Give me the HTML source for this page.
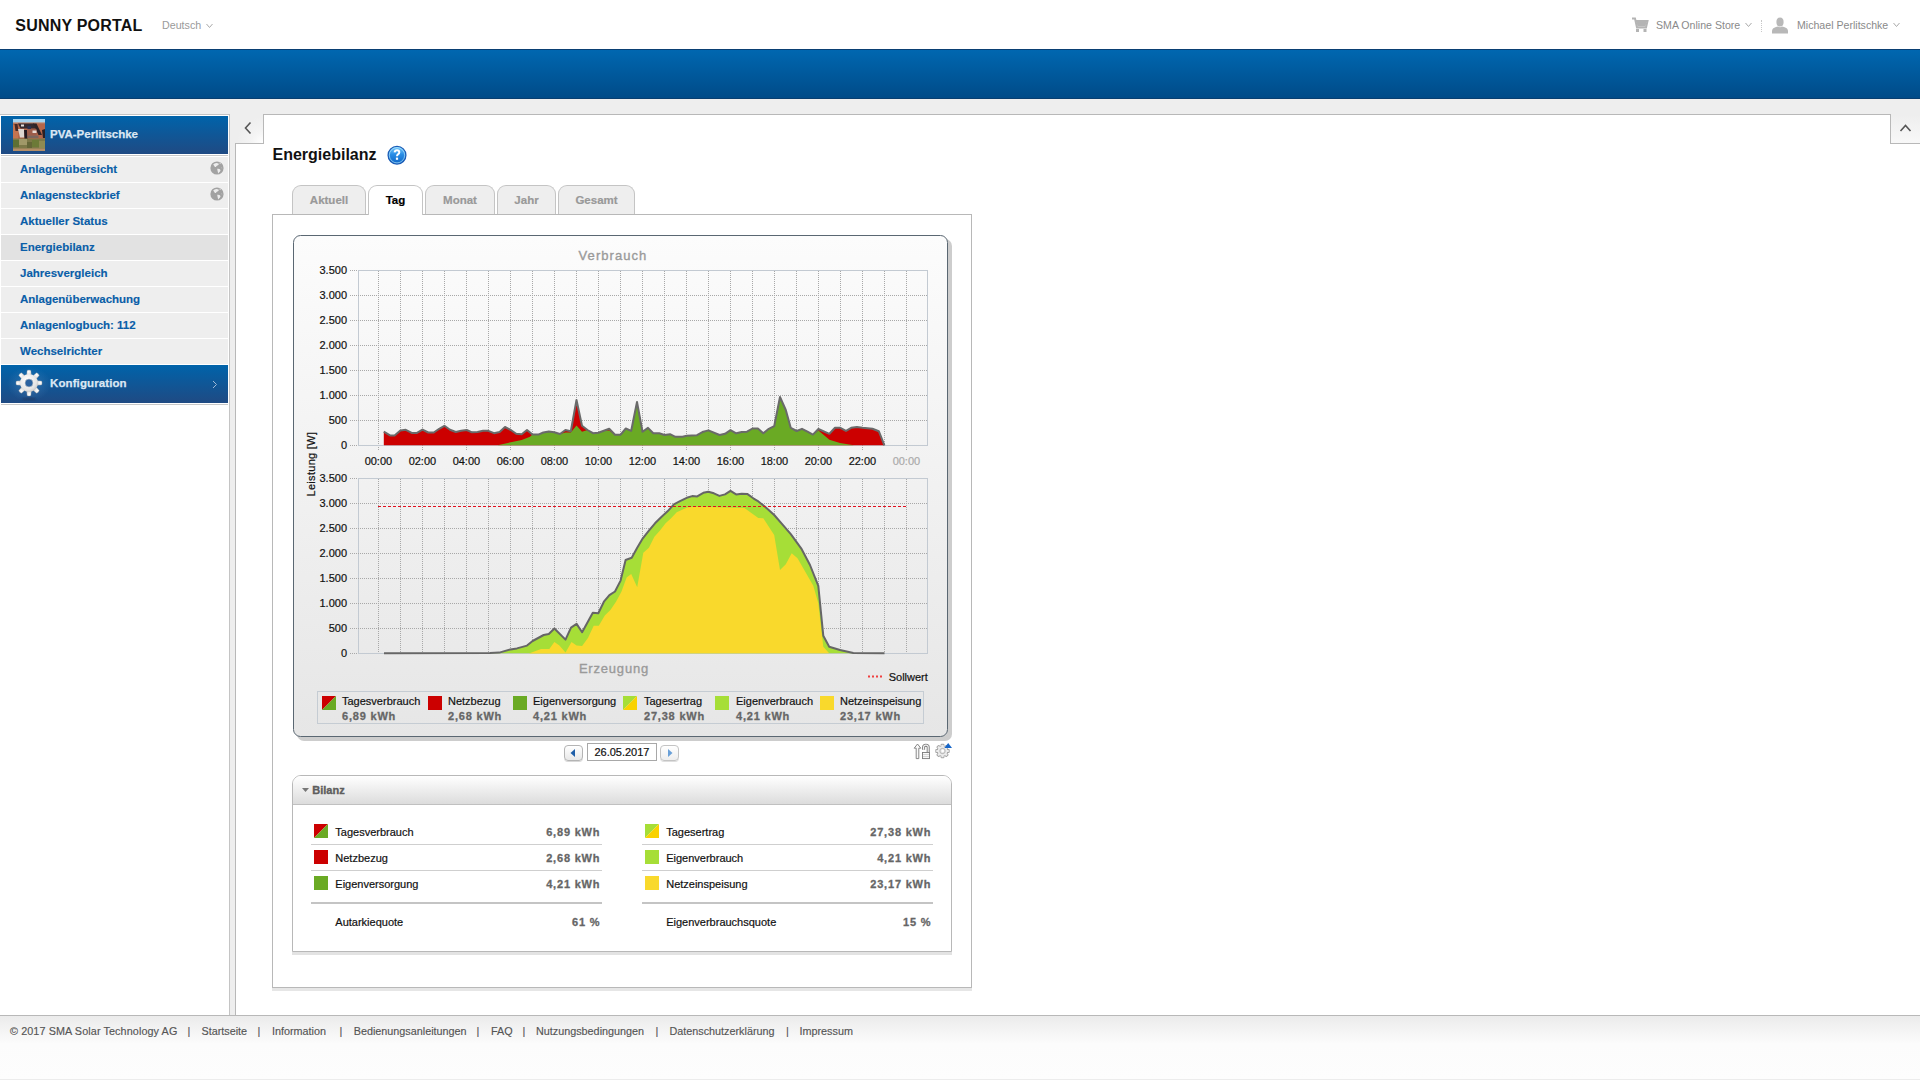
<!DOCTYPE html>
<html><head><meta charset="utf-8"><title>Sunny Portal - Energiebilanz</title>
<style>
*{box-sizing:border-box}
html,body{margin:0;padding:0}
body{width:1920px;height:1080px;overflow:hidden;position:relative;background:#fff;font-family:"Liberation Sans",sans-serif;color:#000}
.a{position:absolute;white-space:nowrap}
.t11{font-size:11px;line-height:11px}
.b{font-weight:bold}
#blue{position:absolute;left:0;top:49px;width:1920px;height:50px;background:linear-gradient(#0067b0,#004b88);border-top:1px solid #0a3f73;border-bottom:1px solid #083e70}
#gray{position:absolute;left:0;top:99px;width:1920px;height:917px;background:#eeeeee}
#side{position:absolute;left:0;top:114px;width:230px;height:902px;background:#fff;border-top:1px solid #c4c4c4;border-right:1px solid #c4c4c4}
.hdrblue{position:absolute;left:1px;width:227px;background:linear-gradient(#0063aa,#1f4a83)}
.mi{position:absolute;left:1px;width:227px;height:25px;background:#eeeeee}
.mi.act{background:#e2e2e2}
.mt{position:absolute;left:20px;font-weight:bold;color:#0a5ea8;font-size:11.5px;line-height:12px;white-space:nowrap;-webkit-text-stroke:0.15px #0a5ea8}
.yl{position:absolute;left:300px;width:47px;text-align:right;font-size:11px;line-height:11px;color:#111;-webkit-text-stroke:0.2px #111}
.xl{position:absolute;top:455.7px;width:40px;text-align:center;font-size:11px;line-height:11px;color:#111;-webkit-text-stroke:0.2px #111}
.xl.grey{color:#aaa;-webkit-text-stroke:0.2px #aaa}
.sw{position:absolute;width:14px;height:14px}
.lt{position:absolute;font-size:11px;line-height:11px;color:#111;white-space:nowrap;-webkit-text-stroke:0.2px #111}
.lv{position:absolute;font-size:11px;line-height:11px;color:#666;font-weight:bold;white-space:nowrap;letter-spacing:0.8px;-webkit-text-stroke:0.3px #666}

.tab{position:absolute;top:185px;height:29px;border:1px solid #c4c4c4;border-bottom:none;border-radius:9px 9px 0 0;background:#eeeeee;text-align:center;font-weight:bold;font-size:11.5px;color:#999}
.tab span{position:absolute;left:0;right:0;top:7.8px;line-height:12px;-webkit-text-stroke:0.2px currentColor}
.tab.act{background:#fff;height:30px;color:#000}
.ft{position:absolute;top:1026.3px;font-size:10.8px;line-height:11px;color:#555;white-space:nowrap;-webkit-text-stroke:0.15px #555}
.sep{position:absolute;height:1px;background:#cfcfcf}
.br{text-align:right}
</style></head>
<body>
<!-- header -->
<div class="a b" style="left:15.3px;top:18.2px;font-size:16px;line-height:16px;color:#111;letter-spacing:0.2px">SUNNY PORTAL</div>
<div class="a" style="left:162px;top:20px;font-size:10.7px;line-height:11px;color:#9a9a9a">Deutsch</div>
<svg class="a" style="left:205px;top:22px" width="10" height="8"><polyline points="1.5,2 4.5,5.5 7.5,2" fill="none" stroke="#aaa" stroke-width="1"/></svg>
<!-- cart -->
<svg class="a" style="left:1631px;top:16px" width="18" height="18" viewBox="0 0 18 18"><path d="M1,2.5 H4 L6,11.5 H15 L16.5,5 H5" fill="none" stroke="#b4b4b4" stroke-width="2"/><path d="M5.5,6 H15.5 L14.5,10.5 H6.5Z" fill="#b4b4b4"/><rect x="5" y="13" width="3" height="3" fill="#b4b4b4"/><rect x="12.5" y="13" width="3" height="3" fill="#b4b4b4"/></svg>
<div class="a" style="left:1656px;top:19.9px;font-size:10.6px;line-height:11px;color:#8a8a8a">SMA Online Store</div>
<svg class="a" style="left:1744px;top:21px" width="10" height="8"><polyline points="1.5,2 4.5,5.5 7.5,2" fill="none" stroke="#aaa" stroke-width="1"/></svg>
<div class="a" style="left:1761px;top:20px;width:1px;height:12px;border-left:1px dotted #c8c8c8"></div>
<!-- person -->
<svg class="a" style="left:1771px;top:17px" width="18" height="17" viewBox="0 0 18 17"><ellipse cx="9" cy="5" rx="3.6" ry="4.5" fill="#b8b8b8"/><path d="M1,16.5 V14 Q1,11 5,10 L7,9.5 Q9,11 11,9.5 L13,10 Q17,11 17,14 V16.5Z" fill="#b8b8b8"/></svg>
<div class="a" style="left:1797px;top:19.9px;font-size:10.6px;line-height:11px;color:#8a8a8a">Michael Perlitschke</div>
<svg class="a" style="left:1892px;top:21px" width="10" height="8"><polyline points="1.5,2 4.5,5.5 7.5,2" fill="none" stroke="#aaa" stroke-width="1"/></svg>

<div id="blue"></div>
<div id="gray"></div>

<!-- sidebar -->
<div id="side"></div>
<div class="hdrblue" style="top:116px;height:38px"></div>
<!-- thumbnail -->
<div class="a" style="left:13px;top:119px;width:32px;height:32px;overflow:hidden"><svg style="position:absolute;left:0;top:0" width="32" height="32" viewBox="0 0 32 32">
<rect x="0" y="0" width="32" height="32" fill="#b06a4c"/>
<rect x="0" y="0" width="32" height="3" fill="#a6d4f0"/>
<rect x="0" y="3" width="32" height="1.5" fill="#b8a49c"/>
<rect x="0" y="4.5" width="32" height="16" fill="#b4664a"/>
<rect x="0" y="6" width="5" height="14" fill="#c47450"/>
<polygon points="5,4.5 21,4.5 22.5,9.5 7.5,9.5" fill="#342a30"/>
<polygon points="1.5,5 4.5,5 5.5,12 2.5,12" fill="#4a2a26"/>
<polygon points="20,4.5 23.5,4.5 29,16 25.5,16" fill="#2e2428"/>
<rect x="8" y="5.5" width="3" height="2" fill="#e4dedc"/>
<rect x="14.5" y="7" width="3.5" height="3" fill="#2a3050"/>
<polygon points="5,10 11,10 11.5,18.5 7,18.5" fill="#dcd6d0"/>
<polygon points="11,11 14,11 14.5,20 11.5,20" fill="#221a22"/>
<rect x="14.5" y="10" width="9" height="6.5" fill="#9c5c4a"/>
<rect x="19.5" y="11.5" width="4" height="2.5" fill="#e8dcd6"/>
<rect x="14.5" y="16.5" width="11" height="2.5" fill="#7a665e"/>
<polygon points="29,11 32,10 32,19 30,19" fill="#2a2024"/>
<rect x="0" y="19.5" width="32" height="13" fill="#7c7848"/>
<rect x="0" y="21" width="6" height="7" fill="#5e7034"/>
<rect x="6" y="20" width="8" height="6" fill="#a09868"/>
<rect x="14" y="23" width="5" height="6" fill="#646638"/>
<rect x="19" y="21" width="7" height="7" fill="#6c7a38"/>
<rect x="26" y="22" width="6" height="7" fill="#8e8a52"/>
<rect x="0" y="29.5" width="32" height="3" fill="#b48e68"/>
</svg></div>
<div class="a b" style="left:50px;top:128.3px;font-size:11.5px;line-height:12px;color:#dbe7f3;-webkit-text-stroke:0.25px #dbe7f3">PVA-Perlitschke</div>
<div class="a" style="left:1px;top:155px;width:227px;height:1px;background:#c8c8c8"></div>
<div class="mi" style="top:157px"></div><div class="mt" style="top:163.2px">Anlagenübersicht</div>
<div class="mi" style="top:183px"></div><div class="mt" style="top:189.2px">Anlagensteckbrief</div>
<div class="mi" style="top:209px"></div><div class="mt" style="top:215.2px">Aktueller Status</div>
<div class="mi act" style="top:235px"></div><div class="mt" style="top:241.2px">Energiebilanz</div>
<div class="mi" style="top:261px"></div><div class="mt" style="top:267.2px">Jahresvergleich</div>
<div class="mi" style="top:287px"></div><div class="mt" style="top:293.2px">Anlagenüberwachung</div>
<div class="mi" style="top:313px"></div><div class="mt" style="top:319.2px">Anlagenlogbuch: 112</div>
<div class="mi" style="top:339px"></div><div class="mt" style="top:345.2px">Wechselrichter</div>
<!-- globes -->
<svg class="a" style="left:209.5px;top:161px" width="14" height="14" viewBox="0 0 14 14"><circle cx="7" cy="7" r="6.6" fill="#a2a2a2"/><path d="M3.2,3.4 Q4.5,1.8 6.5,1.9 L8.6,2.6 Q9.2,3.6 8,4.2 Q6.6,4.6 6.2,5.6 Q5.4,6.6 4.6,5.6 Q4,4.4 3.2,3.4Z M9.4,1.6 Q10.4,2 10.8,2.8 Q10.2,3.3 9.6,2.6Z M7.2,7.8 Q8.8,7.4 10,8.3 Q11,9.4 10,10.6 Q8.9,11.6 8.2,12.6 Q7.6,10.6 7.2,7.8Z M11.6,6.2 Q12.3,6.6 12.2,7.6 Q11.6,7.3 11.6,6.2Z" fill="#ececec"/></svg>
<svg class="a" style="left:209.5px;top:187px" width="14" height="14" viewBox="0 0 14 14"><circle cx="7" cy="7" r="6.6" fill="#a2a2a2"/><path d="M3.2,3.4 Q4.5,1.8 6.5,1.9 L8.6,2.6 Q9.2,3.6 8,4.2 Q6.6,4.6 6.2,5.6 Q5.4,6.6 4.6,5.6 Q4,4.4 3.2,3.4Z M9.4,1.6 Q10.4,2 10.8,2.8 Q10.2,3.3 9.6,2.6Z M7.2,7.8 Q8.8,7.4 10,8.3 Q11,9.4 10,10.6 Q8.9,11.6 8.2,12.6 Q7.6,10.6 7.2,7.8Z M11.6,6.2 Q12.3,6.6 12.2,7.6 Q11.6,7.3 11.6,6.2Z" fill="#ececec"/></svg>
<div class="hdrblue" style="top:365px;height:38px"></div>
<!-- gear -->
<div class="a" style="left:6px;top:366px;width:46px;height:36px;background:radial-gradient(ellipse at 50% 50%,rgba(120,170,220,0.35) 0,rgba(120,170,220,0.12) 14px,rgba(120,170,220,0) 22px)"></div>
<svg class="a" style="left:14px;top:368px" width="30" height="34" viewBox="0 0 30 34">
<defs><radialGradient id="gg" cx="0.4" cy="0.35" r="0.75"><stop offset="0" stop-color="#ffffff"/><stop offset="0.7" stop-color="#e4e4e4"/><stop offset="1" stop-color="#bdbdbd"/></radialGradient>
<filter id="gb"><feGaussianBlur stdDeviation="0.9"/></filter></defs>
<ellipse cx="15" cy="31" rx="7" ry="1.3" fill="#1b355c" opacity="0.7" filter="url(#gb)"/>
<g transform="translate(15,15)">
<g fill="url(#gg)" stroke="#9c9c9c" stroke-width="0.3">
<path d="M-1.9,-12.6 Q0,-13.6 1.9,-12.6 L2.3,-8 L-2.3,-8Z"/>
<path d="M-1.9,-12.6 Q0,-13.6 1.9,-12.6 L2.3,-8 L-2.3,-8Z" transform="rotate(45)"/>
<path d="M-1.9,-12.6 Q0,-13.6 1.9,-12.6 L2.3,-8 L-2.3,-8Z" transform="rotate(90)"/>
<path d="M-1.9,-12.6 Q0,-13.6 1.9,-12.6 L2.3,-8 L-2.3,-8Z" transform="rotate(135)"/>
<path d="M-1.9,-12.6 Q0,-13.6 1.9,-12.6 L2.3,-8 L-2.3,-8Z" transform="rotate(180)"/>
<path d="M-1.9,-12.6 Q0,-13.6 1.9,-12.6 L2.3,-8 L-2.3,-8Z" transform="rotate(225)"/>
<path d="M-1.9,-12.6 Q0,-13.6 1.9,-12.6 L2.3,-8 L-2.3,-8Z" transform="rotate(270)"/>
<path d="M-1.9,-12.6 Q0,-13.6 1.9,-12.6 L2.3,-8 L-2.3,-8Z" transform="rotate(315)"/>
</g>
<circle r="9" fill="url(#gg)"/>
<circle r="4" fill="#2a62a0" stroke="#c8c8c8" stroke-width="0.6"/>
</g></svg>
<div class="a b" style="left:50px;top:376.6px;font-size:11.5px;line-height:12px;color:#dbe7f3;letter-spacing:0.1px;-webkit-text-stroke:0.25px #dbe7f3">Konfiguration</div>
<svg class="a" style="left:211px;top:380px" width="8" height="9"><polyline points="2,1 5.5,4.5 2,8" fill="none" stroke="#9fb8d6" stroke-width="1"/></svg>
<div class="a" style="left:1px;top:404px;width:227px;height:1px;background:#c8c8c8"></div>

<!-- content panel -->
<div class="a" style="left:235px;top:143px;width:1685px;height:873px;background:#fff;border-left:1px solid #b8b8b8;border-top:1px solid #b8b8b8"></div>
<div class="a" style="left:263px;top:114px;width:1628px;height:30px;background:#fff;border:1px solid #b8b8b8;border-bottom:none"></div>
<div class="a" style="left:236px;top:115px;width:27px;height:28px;background:radial-gradient(circle at 100% 100%,#ffffff 0,#f4f4f4 12px,#eeeeee 26px)"></div>
<svg class="a" style="left:243px;top:121px" width="10" height="14"><polyline points="7.5,1.5 2.5,7 7.5,12.5" fill="none" stroke="#555" stroke-width="1.6"/></svg>
<div class="a" style="left:1891px;top:115px;width:29px;height:28px;background:linear-gradient(#eeeeee,#f8f8f8)"></div>
<svg class="a" style="left:1899px;top:123px" width="14" height="10"><polyline points="1.5,8 6.5,2.5 11.5,8" fill="none" stroke="#555" stroke-width="1.6"/></svg>

<!-- title -->
<div class="a b" style="left:272.5px;top:146.8px;font-size:16px;line-height:16px;color:#111">Energiebilanz</div>
<svg class="a" style="left:386px;top:144px" width="22" height="22" viewBox="0 0 22 22">
<defs><linearGradient id="hg" x1="0" y1="0" x2="0" y2="1"><stop offset="0" stop-color="#7fd0ff"/><stop offset="0.45" stop-color="#2a8ee6"/><stop offset="1" stop-color="#0b62c4"/></linearGradient></defs>
<circle cx="11" cy="11.2" r="8.9" fill="url(#hg)" stroke="#1b5cb6" stroke-width="1.3"/>
<circle cx="11" cy="11.2" r="7.7" fill="none" stroke="#b8ecff" stroke-width="0.8" opacity="0.8"/>
<path d="M8.6,8.3 Q8.9,6.2 11,6.2 Q13.3,6.2 13.3,8.3 Q13.3,9.6 11.9,10.4 Q11,11 11,12.3" fill="none" stroke="#fff" stroke-width="2" stroke-linecap="butt"/>
<rect x="9.9" y="13.6" width="2.2" height="2.2" fill="#fff"/>
</svg>

<!-- content box -->
<div class="a" style="left:272px;top:214px;width:700px;height:774px;border:1px solid #b8b8b8;background:#fff;box-shadow:0 3px 0 #e6e6e6"></div>
<!-- tabs -->
<div class="tab" style="left:292px;width:74px"><span>Aktuell</span></div>
<div class="tab act" style="left:368px;width:55px"><span>Tag</span></div>
<div class="tab" style="left:425px;width:70px"><span>Monat</span></div>
<div class="tab" style="left:497px;width:59px"><span>Jahr</span></div>
<div class="tab" style="left:558px;width:77px"><span>Gesamt</span></div>

<svg width="1920" height="1080" style="position:absolute;left:0;top:0">
<defs><linearGradient id="cbg" x1="0" y1="0" x2="0" y2="1"><stop offset="0" stop-color="#fcfcfc"/><stop offset="1" stop-color="#e6e6e6"/></linearGradient></defs>
<rect x="297" y="239" width="655" height="502" rx="7" fill="#cdcdcd"/>
<rect x="293.5" y="235.5" width="654" height="501" rx="7" fill="url(#cbg)" stroke="#5a6772" stroke-width="1"/>
<rect x="358.5" y="270.5" width="569" height="175" fill="none" stroke="#c3cad2" stroke-width="1"/>
<line x1="350" y1="420.5" x2="927" y2="420.5" stroke="#a8a8a8" stroke-width="1" stroke-dasharray="1,1"/>
<line x1="350" y1="395.5" x2="927" y2="395.5" stroke="#a8a8a8" stroke-width="1" stroke-dasharray="1,1"/>
<line x1="350" y1="370.5" x2="927" y2="370.5" stroke="#a8a8a8" stroke-width="1" stroke-dasharray="1,1"/>
<line x1="350" y1="345.5" x2="927" y2="345.5" stroke="#a8a8a8" stroke-width="1" stroke-dasharray="1,1"/>
<line x1="350" y1="320.5" x2="927" y2="320.5" stroke="#a8a8a8" stroke-width="1" stroke-dasharray="1,1"/>
<line x1="350" y1="295.5" x2="927" y2="295.5" stroke="#a8a8a8" stroke-width="1" stroke-dasharray="1,1"/>
<line x1="350" y1="270.5" x2="358" y2="270.5" stroke="#a8a8a8" stroke-width="1" stroke-dasharray="1,1"/>
<line x1="350" y1="445.5" x2="358" y2="445.5" stroke="#a8a8a8" stroke-width="1" stroke-dasharray="1,1"/>
<line x1="378.5" y1="271" x2="378.5" y2="450" stroke="#a8a8a8" stroke-width="1" stroke-dasharray="1,1"/>
<line x1="400.5" y1="271" x2="400.5" y2="445" stroke="#a8a8a8" stroke-width="1" stroke-dasharray="1,1"/>
<line x1="422.5" y1="271" x2="422.5" y2="450" stroke="#a8a8a8" stroke-width="1" stroke-dasharray="1,1"/>
<line x1="444.5" y1="271" x2="444.5" y2="445" stroke="#a8a8a8" stroke-width="1" stroke-dasharray="1,1"/>
<line x1="466.5" y1="271" x2="466.5" y2="450" stroke="#a8a8a8" stroke-width="1" stroke-dasharray="1,1"/>
<line x1="488.5" y1="271" x2="488.5" y2="445" stroke="#a8a8a8" stroke-width="1" stroke-dasharray="1,1"/>
<line x1="510.5" y1="271" x2="510.5" y2="450" stroke="#a8a8a8" stroke-width="1" stroke-dasharray="1,1"/>
<line x1="532.5" y1="271" x2="532.5" y2="445" stroke="#a8a8a8" stroke-width="1" stroke-dasharray="1,1"/>
<line x1="554.5" y1="271" x2="554.5" y2="450" stroke="#a8a8a8" stroke-width="1" stroke-dasharray="1,1"/>
<line x1="576.5" y1="271" x2="576.5" y2="445" stroke="#a8a8a8" stroke-width="1" stroke-dasharray="1,1"/>
<line x1="598.5" y1="271" x2="598.5" y2="450" stroke="#a8a8a8" stroke-width="1" stroke-dasharray="1,1"/>
<line x1="620.5" y1="271" x2="620.5" y2="445" stroke="#a8a8a8" stroke-width="1" stroke-dasharray="1,1"/>
<line x1="642.5" y1="271" x2="642.5" y2="450" stroke="#a8a8a8" stroke-width="1" stroke-dasharray="1,1"/>
<line x1="664.5" y1="271" x2="664.5" y2="445" stroke="#a8a8a8" stroke-width="1" stroke-dasharray="1,1"/>
<line x1="686.5" y1="271" x2="686.5" y2="450" stroke="#a8a8a8" stroke-width="1" stroke-dasharray="1,1"/>
<line x1="708.5" y1="271" x2="708.5" y2="445" stroke="#a8a8a8" stroke-width="1" stroke-dasharray="1,1"/>
<line x1="730.5" y1="271" x2="730.5" y2="450" stroke="#a8a8a8" stroke-width="1" stroke-dasharray="1,1"/>
<line x1="752.5" y1="271" x2="752.5" y2="445" stroke="#a8a8a8" stroke-width="1" stroke-dasharray="1,1"/>
<line x1="774.5" y1="271" x2="774.5" y2="450" stroke="#a8a8a8" stroke-width="1" stroke-dasharray="1,1"/>
<line x1="796.5" y1="271" x2="796.5" y2="445" stroke="#a8a8a8" stroke-width="1" stroke-dasharray="1,1"/>
<line x1="818.5" y1="271" x2="818.5" y2="450" stroke="#a8a8a8" stroke-width="1" stroke-dasharray="1,1"/>
<line x1="840.5" y1="271" x2="840.5" y2="445" stroke="#a8a8a8" stroke-width="1" stroke-dasharray="1,1"/>
<line x1="862.5" y1="271" x2="862.5" y2="450" stroke="#a8a8a8" stroke-width="1" stroke-dasharray="1,1"/>
<line x1="884.5" y1="271" x2="884.5" y2="445" stroke="#a8a8a8" stroke-width="1" stroke-dasharray="1,1"/>
<line x1="906.5" y1="271" x2="906.5" y2="450" stroke="#a8a8a8" stroke-width="1" stroke-dasharray="1,1"/>
<rect x="358.5" y="478.5" width="569" height="175" fill="none" stroke="#c3cad2" stroke-width="1"/>
<line x1="350" y1="628.5" x2="927" y2="628.5" stroke="#a8a8a8" stroke-width="1" stroke-dasharray="1,1"/>
<line x1="350" y1="603.5" x2="927" y2="603.5" stroke="#a8a8a8" stroke-width="1" stroke-dasharray="1,1"/>
<line x1="350" y1="578.5" x2="927" y2="578.5" stroke="#a8a8a8" stroke-width="1" stroke-dasharray="1,1"/>
<line x1="350" y1="553.5" x2="927" y2="553.5" stroke="#a8a8a8" stroke-width="1" stroke-dasharray="1,1"/>
<line x1="350" y1="528.5" x2="927" y2="528.5" stroke="#a8a8a8" stroke-width="1" stroke-dasharray="1,1"/>
<line x1="350" y1="503.5" x2="927" y2="503.5" stroke="#a8a8a8" stroke-width="1" stroke-dasharray="1,1"/>
<line x1="350" y1="478.5" x2="358" y2="478.5" stroke="#a8a8a8" stroke-width="1" stroke-dasharray="1,1"/>
<line x1="350" y1="653.5" x2="358" y2="653.5" stroke="#a8a8a8" stroke-width="1" stroke-dasharray="1,1"/>
<line x1="378.5" y1="479" x2="378.5" y2="653" stroke="#a8a8a8" stroke-width="1" stroke-dasharray="1,1"/>
<line x1="400.5" y1="479" x2="400.5" y2="653" stroke="#a8a8a8" stroke-width="1" stroke-dasharray="1,1"/>
<line x1="422.5" y1="479" x2="422.5" y2="653" stroke="#a8a8a8" stroke-width="1" stroke-dasharray="1,1"/>
<line x1="444.5" y1="479" x2="444.5" y2="653" stroke="#a8a8a8" stroke-width="1" stroke-dasharray="1,1"/>
<line x1="466.5" y1="479" x2="466.5" y2="653" stroke="#a8a8a8" stroke-width="1" stroke-dasharray="1,1"/>
<line x1="488.5" y1="479" x2="488.5" y2="653" stroke="#a8a8a8" stroke-width="1" stroke-dasharray="1,1"/>
<line x1="510.5" y1="479" x2="510.5" y2="653" stroke="#a8a8a8" stroke-width="1" stroke-dasharray="1,1"/>
<line x1="532.5" y1="479" x2="532.5" y2="653" stroke="#a8a8a8" stroke-width="1" stroke-dasharray="1,1"/>
<line x1="554.5" y1="479" x2="554.5" y2="653" stroke="#a8a8a8" stroke-width="1" stroke-dasharray="1,1"/>
<line x1="576.5" y1="479" x2="576.5" y2="653" stroke="#a8a8a8" stroke-width="1" stroke-dasharray="1,1"/>
<line x1="598.5" y1="479" x2="598.5" y2="653" stroke="#a8a8a8" stroke-width="1" stroke-dasharray="1,1"/>
<line x1="620.5" y1="479" x2="620.5" y2="653" stroke="#a8a8a8" stroke-width="1" stroke-dasharray="1,1"/>
<line x1="642.5" y1="479" x2="642.5" y2="653" stroke="#a8a8a8" stroke-width="1" stroke-dasharray="1,1"/>
<line x1="664.5" y1="479" x2="664.5" y2="653" stroke="#a8a8a8" stroke-width="1" stroke-dasharray="1,1"/>
<line x1="686.5" y1="479" x2="686.5" y2="653" stroke="#a8a8a8" stroke-width="1" stroke-dasharray="1,1"/>
<line x1="708.5" y1="479" x2="708.5" y2="653" stroke="#a8a8a8" stroke-width="1" stroke-dasharray="1,1"/>
<line x1="730.5" y1="479" x2="730.5" y2="653" stroke="#a8a8a8" stroke-width="1" stroke-dasharray="1,1"/>
<line x1="752.5" y1="479" x2="752.5" y2="653" stroke="#a8a8a8" stroke-width="1" stroke-dasharray="1,1"/>
<line x1="774.5" y1="479" x2="774.5" y2="653" stroke="#a8a8a8" stroke-width="1" stroke-dasharray="1,1"/>
<line x1="796.5" y1="479" x2="796.5" y2="653" stroke="#a8a8a8" stroke-width="1" stroke-dasharray="1,1"/>
<line x1="818.5" y1="479" x2="818.5" y2="653" stroke="#a8a8a8" stroke-width="1" stroke-dasharray="1,1"/>
<line x1="840.5" y1="479" x2="840.5" y2="653" stroke="#a8a8a8" stroke-width="1" stroke-dasharray="1,1"/>
<line x1="862.5" y1="479" x2="862.5" y2="653" stroke="#a8a8a8" stroke-width="1" stroke-dasharray="1,1"/>
<line x1="884.5" y1="479" x2="884.5" y2="653" stroke="#a8a8a8" stroke-width="1" stroke-dasharray="1,1"/>
<line x1="906.5" y1="479" x2="906.5" y2="653" stroke="#a8a8a8" stroke-width="1" stroke-dasharray="1,1"/>
<path d="M383.8,445.3 L383.8,431.7 L390.0,435.4 L394.6,435.4 L400.4,430.4 L405.8,429.8 L411.7,432.9 L417.0,432.9 L422.5,429.6 L428.3,432.5 L433.8,432.5 L439.2,428.8 L444.4,425.8 L450.0,429.8 L455.8,432.0 L461.2,430.8 L466.7,430.0 L472.0,432.3 L477.5,432.0 L483.0,430.8 L488.3,430.8 L494.0,433.2 L499.6,432.0 L505.0,427.0 L510.8,430.0 L516.2,433.8 L521.7,434.2 L527.0,430.0 L532.5,434.6 L538.3,434.6 L543.3,432.5 L548.8,431.4 L554.2,432.3 L560.0,434.0 L565.4,430.0 L570.8,431.2 L576.5,400.0 L582.0,425.8 L587.5,430.0 L593.0,433.2 L598.3,432.7 L603.8,430.8 L609.2,428.8 L615.0,434.8 L620.4,434.8 L625.8,428.5 L631.2,430.8 L637.0,402.0 L642.5,431.7 L648.0,427.9 L653.3,433.2 L659.2,433.3 L664.6,435.0 L670.0,434.2 L675.4,436.8 L682.5,436.8 L686.7,435.7 L697.0,435.2 L703.3,431.7 L708.4,430.4 L719.6,435.0 L725.0,433.8 L730.5,430.2 L736.2,433.3 L741.7,432.0 L747.0,431.7 L752.5,428.5 L757.9,428.5 L763.3,433.2 L768.8,428.8 L774.2,426.2 L780.0,397.0 L785.8,410.0 L790.8,427.9 L796.7,431.0 L802.0,428.8 L807.5,431.7 L812.9,434.6 L818.4,429.0 L829.4,433.8 L835.0,427.8 L840.3,427.8 L846.0,430.9 L851.2,427.8 L856.9,426.9 L862.5,427.8 L872.5,428.8 L878.8,431.2 L884.4,445.3 L884.4,445.3 Z" fill="#cc0000"/>
<path d="M497.6,445.3 L497.6,445.3 L510.8,442.2 L521.7,440.0 L530.0,436.7 L532.5,434.6 L538.3,434.6 L543.3,432.5 L548.8,431.4 L554.2,432.3 L560.0,434.0 L565.4,432.5 L570.8,432.5 L576.5,425.4 L582.0,431.7 L587.5,430.0 L593.0,433.2 L598.3,432.7 L603.8,430.8 L609.2,430.5 L615.0,434.8 L620.4,434.8 L625.8,428.5 L631.2,430.8 L637.0,402.0 L642.5,431.7 L648.0,427.9 L653.3,433.2 L659.2,433.3 L664.6,435.0 L670.0,434.2 L675.4,436.8 L682.5,436.8 L686.7,435.7 L697.0,435.2 L703.3,431.7 L708.4,430.4 L719.6,435.0 L725.0,433.8 L730.5,430.2 L736.2,433.3 L741.7,432.0 L747.0,431.7 L752.5,428.5 L757.9,428.5 L763.3,433.2 L768.8,428.8 L774.2,426.2 L780.0,397.0 L785.8,410.0 L790.8,427.9 L796.7,431.0 L802.0,428.8 L807.5,431.7 L812.9,434.6 L818.4,430.6 L829.4,439.7 L840.0,443.0 L853.8,445.3 L853.8,445.3 Z" fill="#6aaa24"/>
<path d="M383.8,431.7 L390.0,435.4 L394.6,435.4 L400.4,430.4 L405.8,429.8 L411.7,432.9 L417.0,432.9 L422.5,429.6 L428.3,432.5 L433.8,432.5 L439.2,428.8 L444.4,425.8 L450.0,429.8 L455.8,432.0 L461.2,430.8 L466.7,430.0 L472.0,432.3 L477.5,432.0 L483.0,430.8 L488.3,430.8 L494.0,433.2 L499.6,432.0 L505.0,427.0 L510.8,430.0 L516.2,433.8 L521.7,434.2 L527.0,430.0 L532.5,434.6 L538.3,434.6 L543.3,432.5 L548.8,431.4 L554.2,432.3 L560.0,434.0 L565.4,430.0 L570.8,431.2 L576.5,400.0 L582.0,425.8 L587.5,430.0 L593.0,433.2 L598.3,432.7 L603.8,430.8 L609.2,428.8 L615.0,434.8 L620.4,434.8 L625.8,428.5 L631.2,430.8 L637.0,402.0 L642.5,431.7 L648.0,427.9 L653.3,433.2 L659.2,433.3 L664.6,435.0 L670.0,434.2 L675.4,436.8 L682.5,436.8 L686.7,435.7 L697.0,435.2 L703.3,431.7 L708.4,430.4 L719.6,435.0 L725.0,433.8 L730.5,430.2 L736.2,433.3 L741.7,432.0 L747.0,431.7 L752.5,428.5 L757.9,428.5 L763.3,433.2 L768.8,428.8 L774.2,426.2 L780.0,397.0 L785.8,410.0 L790.8,427.9 L796.7,431.0 L802.0,428.8 L807.5,431.7 L812.9,434.6 L818.4,429.0 L829.4,433.8 L835.0,427.8 L840.3,427.8 L846.0,430.9 L851.2,427.8 L856.9,426.9 L862.5,427.8 L872.5,428.8 L878.8,431.2 L884.4,445.3" fill="none" stroke="#6a6a6a" stroke-width="2" stroke-linejoin="round"/>
<line x1="358" y1="445.5" x2="384" y2="445.5" stroke="#c3cad2" stroke-width="1"/>
<path d="M490.0,653.3 L490.0,653.0 L499.3,652.6 L510.4,649.4 L516.9,648.4 L527.0,645.6 L532.6,641.0 L543.7,635.0 L548.8,634.0 L554.4,628.5 L565.5,639.6 L571.0,627.6 L576.6,623.9 L582.1,632.2 L592.8,612.8 L598.3,613.2 L603.9,601.7 L609.4,595.2 L615.0,591.5 L620.6,580.6 L625.6,560.0 L631.7,557.8 L637.2,547.8 L642.8,538.3 L648.9,530.6 L655.0,523.3 L661.1,517.2 L667.8,511.1 L673.9,504.4 L680.0,501.1 L686.7,497.8 L692.2,496.1 L697.2,496.4 L703.3,492.8 L708.3,491.7 L713.9,493.3 L719.4,495.9 L725.0,494.4 L730.5,490.8 L736.1,494.4 L741.7,493.7 L747.2,493.9 L753.3,498.3 L757.5,500.8 L765.0,506.7 L774.2,515.0 L781.7,523.7 L790.8,534.2 L801.7,549.2 L810.0,565.0 L818.3,585.8 L823.3,635.8 L829.2,646.7 L840.0,650.0 L853.3,653.0 L884.5,653.3 Z" fill="#a6de37"/>
<path d="M528.9,653.5 L541.0,648.9 L549.3,648.9 L554.4,642.0 L559.4,645.6 L565.5,652.6 L571.5,642.0 L576.6,645.6 L582.1,646.0 L588.1,637.8 L593.7,625.7 L598.8,625.7 L604.8,615.6 L610.4,610.0 L616.0,601.7 L621.5,591.5 L626.6,577.6 L631.2,573.9 L637.2,587.3 L643.3,552.8 L648.9,547.8 L654.4,536.7 L660.0,530.6 L665.6,523.3 L671.1,518.3 L676.7,512.2 L687.8,507.2 L700.0,506.8 L744.4,508.0 L751.7,513.3 L758.3,518.0 L763.3,518.3 L774.2,535.0 L780.0,570.0 L785.8,564.2 L791.7,553.3 L797.5,558.3 L813.3,585.8 L818.3,603.3 L823.3,646.7 L829.2,653.3 Z" fill="#f9d92c"/>
<path d="M384.0,653.3 L490.0,653.0 L499.3,652.6 L510.4,649.4 L516.9,648.4 L527.0,645.6 L532.6,641.0 L543.7,635.0 L548.8,634.0 L554.4,628.5 L565.5,639.6 L571.0,627.6 L576.6,623.9 L582.1,632.2 L592.8,612.8 L598.3,613.2 L603.9,601.7 L609.4,595.2 L615.0,591.5 L620.6,580.6 L625.6,560.0 L631.7,557.8 L637.2,547.8 L642.8,538.3 L648.9,530.6 L655.0,523.3 L661.1,517.2 L667.8,511.1 L673.9,504.4 L680.0,501.1 L686.7,497.8 L692.2,496.1 L697.2,496.4 L703.3,492.8 L708.3,491.7 L713.9,493.3 L719.4,495.9 L725.0,494.4 L730.5,490.8 L736.1,494.4 L741.7,493.7 L747.2,493.9 L753.3,498.3 L757.5,500.8 L765.0,506.7 L774.2,515.0 L781.7,523.7 L790.8,534.2 L801.7,549.2 L810.0,565.0 L818.3,585.8 L823.3,635.8 L829.2,646.7 L840.0,650.0 L853.3,653.0 L884.5,653.3" fill="none" stroke="#666" stroke-width="2" stroke-linejoin="round"/>
<line x1="378" y1="506.5" x2="906" y2="506.5" stroke="#e0101e" stroke-width="1" stroke-dasharray="3,2"/>
<line x1="868" y1="676.5" x2="883" y2="676.5" stroke="#f04040" stroke-width="2" stroke-dasharray="2,2"/>
</svg>
<div class="yl" style="top:439.5px">0</div>
<div class="yl" style="top:414.5px">500</div>
<div class="yl" style="top:389.5px">1.000</div>
<div class="yl" style="top:364.5px">1.500</div>
<div class="yl" style="top:339.5px">2.000</div>
<div class="yl" style="top:314.5px">2.500</div>
<div class="yl" style="top:289.5px">3.000</div>
<div class="yl" style="top:264.5px">3.500</div>
<div class="yl" style="top:647.5px">0</div>
<div class="yl" style="top:622.5px">500</div>
<div class="yl" style="top:597.5px">1.000</div>
<div class="yl" style="top:572.5px">1.500</div>
<div class="yl" style="top:547.5px">2.000</div>
<div class="yl" style="top:522.5px">2.500</div>
<div class="yl" style="top:497.5px">3.000</div>
<div class="yl" style="top:472.5px">3.500</div>
<div class="xl" style="left:358.4px">00:00</div>
<div class="xl" style="left:402.4px">02:00</div>
<div class="xl" style="left:446.4px">04:00</div>
<div class="xl" style="left:490.4px">06:00</div>
<div class="xl" style="left:534.4px">08:00</div>
<div class="xl" style="left:578.4px">10:00</div>
<div class="xl" style="left:622.4px">12:00</div>
<div class="xl" style="left:666.4px">14:00</div>
<div class="xl" style="left:710.4px">16:00</div>
<div class="xl" style="left:754.4px">18:00</div>
<div class="xl" style="left:798.4px">20:00</div>
<div class="xl" style="left:842.4px">22:00</div>
<div class="xl grey" style="left:886.4px">00:00</div>
<div class="a" style="left:578.6px;top:249px;font-size:13px;line-height:13px;color:#9a9a9a;letter-spacing:1.05px;-webkit-text-stroke:0.35px #9a9a9a">Verbrauch</div>
<div class="a" style="left:578.9px;top:662.3px;font-size:13px;line-height:13px;color:#9a9a9a;letter-spacing:0.8px;-webkit-text-stroke:0.35px #9a9a9a">Erzeugung</div>
<div class="a" style="left:278.5px;top:458.5px;width:64px;font-size:11px;line-height:11px;color:#111;text-align:center;letter-spacing:0.3px;-webkit-text-stroke:0.2px #111;transform:rotate(-90deg);transform-origin:32px 5.5px">Leistung [W]</div>
<div class="lt" style="left:888.7px;top:671.6px">Sollwert</div>

<!-- legend -->
<div class="a" style="left:317px;top:691px;width:607px;height:33px;border:1px solid #c5ccd3"></div>
<div class="sw" style="left:322px;top:696px;"><svg width="14" height="14" style="display:block"><polygon points="0,0 14,0 0,14" fill="#cc0000"/><polygon points="14,0 14,14 0,14" fill="#6aaa24"/></svg></div>
<div class="lt" style="left:342px;top:695.5px">Tagesverbrauch</div><div class="lv" style="left:342px;top:711.4px">6,89 kWh</div>
<div class="sw" style="left:428px;top:696px;background:#cc0000"></div>
<div class="lt" style="left:448px;top:695.5px">Netzbezug</div><div class="lv" style="left:448px;top:711.4px">2,68 kWh</div>
<div class="sw" style="left:513px;top:696px;background:#6aaa24"></div>
<div class="lt" style="left:533px;top:695.5px">Eigenversorgung</div><div class="lv" style="left:533px;top:711.4px">4,21 kWh</div>
<div class="sw" style="left:623px;top:696px;"><svg width="14" height="14" style="display:block"><polygon points="0,0 14,0 0,14" fill="#a6de37"/><polygon points="14,0 14,14 0,14" fill="#f9d200"/></svg></div>
<div class="lt" style="left:644px;top:695.5px">Tagesertrag</div><div class="lv" style="left:644px;top:711.4px">27,38 kWh</div>
<div class="sw" style="left:715px;top:696px;background:#a6de37"></div>
<div class="lt" style="left:736px;top:695.5px">Eigenverbrauch</div><div class="lv" style="left:736px;top:711.4px">4,21 kWh</div>
<div class="sw" style="left:820px;top:696px;background:#f9d92c"></div>
<div class="lt" style="left:840px;top:695.5px">Netzeinspeisung</div><div class="lv" style="left:840px;top:711.4px">23,17 kWh</div>

<!-- date nav -->
<div class="a" style="left:564px;top:745px;width:19px;height:16px;border:1px solid #b4b4b4;border-radius:4px;background:linear-gradient(#ffffff,#e8e8e8);box-shadow:0 1px 0 #d8d8d8"></div>
<svg class="a" style="left:569px;top:748px" width="8" height="10"><polygon points="6,1 6,9 1.5,5" fill="#1f5fa8"/></svg>
<div class="a" style="left:587px;top:743px;width:70px;height:18px;border:1px solid #a8a8a8;background:#fff"></div>
<div class="lt" style="left:594.4px;top:746.7px">26.05.2017</div>
<div class="a" style="left:660px;top:745px;width:19px;height:16px;border:1px solid #c4c4c4;border-radius:4px;background:linear-gradient(#ffffff,#eeeeee);box-shadow:0 1px 0 #dedede"></div>
<svg class="a" style="left:666px;top:748px" width="8" height="10"><polygon points="2,1 2,9 6.5,5" fill="#6aa0d8"/></svg>
<!-- icons right -->
<svg class="a" style="left:905px;top:738px" width="55" height="28" viewBox="0 0 55 28">
<path d="M12.5,6 L15.8,10.2 L13.8,10.2 L13.8,20.6 L11.2,20.6 L11.2,10.2 L9.2,10.2Z" fill="#fafafa" stroke="#7a7a7a" stroke-width="0.9" stroke-linejoin="round"/>
<path d="M18.6,11.8 V9.2 Q18.6,7.2 20.9,7.2 Q23.2,7.2 23.2,9.2 V14.5" fill="none" stroke="#7a7a7a" stroke-width="3"/>
<path d="M18.6,11.8 V9.2 Q18.6,7.2 20.9,7.2 Q23.2,7.2 23.2,9.2 V14.5" fill="none" stroke="#f4f4f4" stroke-width="1.2"/>
<rect x="17.5" y="14.5" width="7" height="6.1" fill="#fafafa" stroke="#7a7a7a" stroke-width="0.9"/>
<line x1="18" y1="16.6" x2="24" y2="16.6" stroke="#c4c4c4" stroke-width="0.8"/><line x1="18" y1="18.6" x2="24" y2="18.6" stroke="#c4c4c4" stroke-width="0.8"/>
<g transform="translate(37.5,13)">
<g fill="#a6a6a6"><rect x="-1.9" y="-7.2" width="3.8" height="14.4" rx="1"/><rect x="-1.9" y="-7.2" width="3.8" height="14.4" rx="1" transform="rotate(45)"/><rect x="-1.9" y="-7.2" width="3.8" height="14.4" rx="1" transform="rotate(90)"/><rect x="-1.9" y="-7.2" width="3.8" height="14.4" rx="1" transform="rotate(135)"/><circle r="5.6"/></g>
<g fill="#ececec"><rect x="-1.1" y="-6.3" width="2.2" height="12.6" rx="0.6"/><rect x="-1.1" y="-6.3" width="2.2" height="12.6" rx="0.6" transform="rotate(45)"/><rect x="-1.1" y="-6.3" width="2.2" height="12.6" rx="0.6" transform="rotate(90)"/><rect x="-1.1" y="-6.3" width="2.2" height="12.6" rx="0.6" transform="rotate(135)"/><circle r="4.8"/></g>
<circle r="2.6" fill="none" stroke="#bdbdbd" stroke-width="1.2"/><circle cx="0.3" cy="-0.3" r="1.2" fill="#fff"/>
</g>
<polygon points="39.3,10 47,10 43.2,5" fill="#1565c8"/>
</svg>

<!-- Bilanz panel -->
<div class="a" style="left:292px;top:775px;width:660px;height:177px;border:1px solid #b8b8b8;border-radius:9px 9px 0 0;background:#fff;box-shadow:0 3px 0 #e3e3e3"></div>
<div class="a" style="left:293px;top:776px;width:658px;height:29px;border-radius:8px 8px 0 0;background:linear-gradient(#ffffff,#dcdcdc);border-bottom:1px solid #c0c0c0"></div>
<svg class="a" style="left:301px;top:787px" width="9" height="6"><polygon points="1,1 8,1 4.5,5" fill="#777"/></svg>
<div class="a b" style="left:312.3px;top:784.7px;font-size:11px;line-height:11px;color:#5e5e5e;-webkit-text-stroke:0.35px #5e5e5e">Bilanz</div>
<!-- left column -->
<div class="sw" style="left:314px;top:824px;"><svg width="14" height="14" style="display:block"><polygon points="0,0 14,0 0,14" fill="#cc0000"/><polygon points="14,0 14,14 0,14" fill="#6aaa24"/></svg></div>
<div class="lt" style="left:335.3px;top:826.7px">Tagesverbrauch</div><div class="lv br" style="left:501px;width:99.3px;top:826.7px">6,89 kWh</div>
<div class="sep" style="left:311px;top:844px;width:291px"></div>
<div class="sw" style="left:314px;top:850px;background:#cc0000"></div>
<div class="lt" style="left:335.3px;top:852.7px">Netzbezug</div><div class="lv br" style="left:501px;width:99.3px;top:852.7px">2,68 kWh</div>
<div class="sep" style="left:311px;top:870px;width:291px"></div>
<div class="sw" style="left:314px;top:876px;background:#6aaa24"></div>
<div class="lt" style="left:335.3px;top:878.7px">Eigenversorgung</div><div class="lv br" style="left:501px;width:99.3px;top:878.7px">4,21 kWh</div>
<div class="sep" style="left:311px;top:902px;width:291px;height:2px;background:#c4c4c4"></div>
<div class="lt" style="left:335.3px;top:916.7px">Autarkiequote</div><div class="lv br" style="left:501px;width:99.3px;top:916.7px">61 %</div>
<!-- right column -->
<div class="sw" style="left:645px;top:824px;"><svg width="14" height="14" style="display:block"><polygon points="0,0 14,0 0,14" fill="#a6de37"/><polygon points="14,0 14,14 0,14" fill="#f9d200"/></svg></div>
<div class="lt" style="left:666.2px;top:826.7px">Tagesertrag</div><div class="lv br" style="left:831px;width:100.3px;top:826.7px">27,38 kWh</div>
<div class="sep" style="left:642px;top:844px;width:291px"></div>
<div class="sw" style="left:645px;top:850px;background:#a6de37"></div>
<div class="lt" style="left:666.2px;top:852.7px">Eigenverbrauch</div><div class="lv br" style="left:831px;width:100.3px;top:852.7px">4,21 kWh</div>
<div class="sep" style="left:642px;top:870px;width:291px"></div>
<div class="sw" style="left:645px;top:876px;background:#f9d92c"></div>
<div class="lt" style="left:666.2px;top:878.7px">Netzeinspeisung</div><div class="lv br" style="left:831px;width:100.3px;top:878.7px">23,17 kWh</div>
<div class="sep" style="left:642px;top:902px;width:291px;height:2px;background:#c4c4c4"></div>
<div class="lt" style="left:666.2px;top:916.7px">Eigenverbrauchsquote</div><div class="lv br" style="left:831px;width:100.3px;top:916.7px">15 %</div>

<!-- footer -->
<div class="a" style="left:0;top:1015px;width:1920px;height:65px;border-top:1px solid #b8b8b8;background:linear-gradient(#ebebeb,#f3f3f3 13px,#fcfcfc 28px,#fdfdfd)"></div>
<div class="a" style="left:0;top:1079px;width:1920px;height:1px;background:#ececec"></div>
<div class="ft" style="left:10px;letter-spacing:0.1px">© 2017 SMA Solar Technology AG</div>
<div class="ft" style="left:187.5px">|</div>
<div class="ft" style="left:201.5px">Startseite</div>
<div class="ft" style="left:257.5px">|</div>
<div class="ft" style="left:272px">Information</div>
<div class="ft" style="left:339.5px">|</div>
<div class="ft" style="left:353.7px">Bedienungsanleitungen</div>
<div class="ft" style="left:476.5px">|</div>
<div class="ft" style="left:491px">FAQ</div>
<div class="ft" style="left:522.5px">|</div>
<div class="ft" style="left:536px">Nutzungsbedingungen</div>
<div class="ft" style="left:655.5px">|</div>
<div class="ft" style="left:669.5px">Datenschutzerklärung</div>
<div class="ft" style="left:786px">|</div>
<div class="ft" style="left:799.5px">Impressum</div>
</body></html>
